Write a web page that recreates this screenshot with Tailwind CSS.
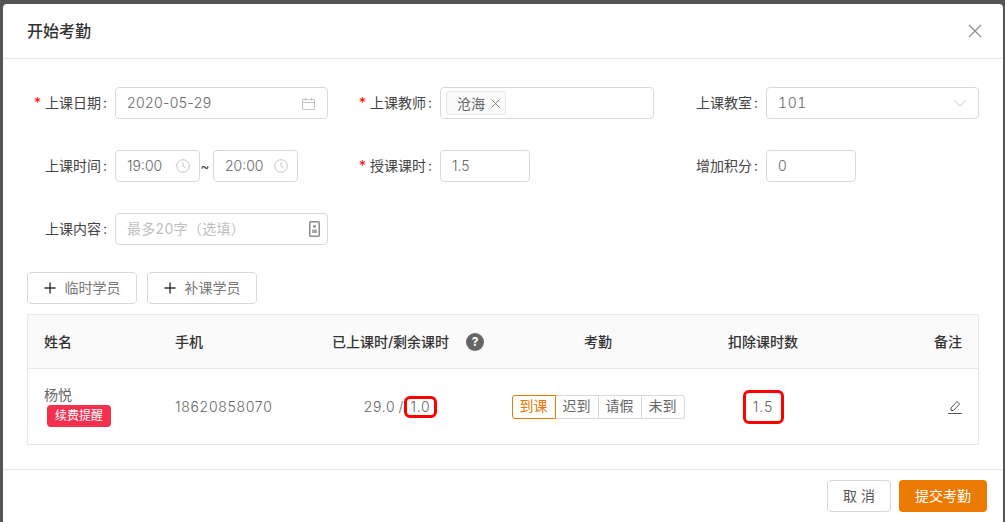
<!DOCTYPE html>
<html lang="zh-CN">

<head>
    <meta charset="UTF-8">
    <title>开始考勤</title>
    <script src="https://cdn.jsdelivr.net/npm/@tailwindcss/browser@4"></script>
</head>

<body class="bg-[#555555] h-[522px] overflow-hidden font-['Inter','Noto_Sans_CJK_SC',sans-serif] text-[14px] text-[#666666]">
    <div class="ml-[3px] mt-[4px] w-[1000px] h-[518px] bg-white rounded-t-[4px] flex flex-col">
        <!-- header -->
        <div class="h-[55px] shrink-0 border-b border-[#e8e8e8] flex items-center justify-between pl-[24px] pr-[21px]">
            <h1 class="text-[16px] font-medium text-[#333333]">开始考勤</h1>
            <svg class="w-[14px] h-[14px]" viewBox="0 0 14 14" fill="none" stroke="#888888" stroke-width="1.1"><path d="M1 1l12 12M13 1L1 13" /></svg>
        </div>

        <!-- form -->
        <div class="px-[24px] pt-[28px] grid grid-cols-[325px_326px_1fr] gap-y-[31px] h-[213px] content-start">
            <div class="flex items-center h-[32px]">
                <label class="w-[88px] pr-[8px] pb-[2px] flex justify-end text-[#444444]"><span class="text-[#ff0000] mr-[4px]">*</span>上课日期<span class="ml-[2px]">:</span></label>
                <div class="w-[213px] h-[32px] border border-[#d9d9d9] rounded-[4px] flex items-center justify-between pl-[11px] pr-[12px] font-light tracking-[0.4px]">
                    <span class="pb-[2px]">2020-05-29</span>
                    <svg class="w-[13px] h-[13px]" viewBox="0 0 13 13" fill="none" stroke="#c4c4c4"><path d="M.5 2.500h12v10H.5zM.5 5.500h12M3.500.5v3M9.500.5v3" /></svg>
                </div>
            </div>
            <div class="flex items-center h-[32px]">
                <label class="w-[88px] pr-[8px] pb-[2px] flex justify-end text-[#444444]"><span class="text-[#ff0000] mr-[4px]">*</span>上课教师<span class="ml-[2px]">:</span></label>
                <div class="w-[214px] h-[32px] border border-[#d9d9d9] rounded-[4px] flex items-center pl-[5px]">
                    <span class="h-[24px] w-[60px] bg-[#fafafa] border border-[#e8e8e8] rounded-[2px] flex items-center pl-[10px] gap-[6px]">沧海
                        <svg class="w-[9px] h-[9px]" viewBox="0 0 9 9" fill="none" stroke="#888888"><path d="M.5.5l8 8M8.500.5l-8 8" /></svg>
                    </span>
                </div>
            </div>
            <div class="flex items-center h-[32px]">
                <label class="w-[88px] pr-[8px] pb-[2px] flex justify-end text-[#444444]">上课教室<span class="ml-[2px]">:</span></label>
                <div class="w-[213px] h-[32px] border border-[#d9d9d9] rounded-[4px] flex items-center justify-between pl-[11px] pr-[12px] font-light tracking-[0.6px] tabular-nums">
                    <span class="pb-[2px]">101</span>
                    <svg class="w-[12px] h-[7px]" viewBox="0 0 12 7" fill="none" stroke="#c9c9c9"><path d="M.5.5L6 6 11.500.5" /></svg>
                </div>
            </div>

            <div class="flex items-center h-[32px]">
                <label class="w-[88px] pr-[8px] pb-[2px] flex justify-end text-[#444444]">上课时间<span class="ml-[2px]">:</span></label>
                <div class="w-[85px] h-[32px] border border-[#d9d9d9] rounded-[4px] flex items-center justify-between pl-[11px] pr-[9px] font-light">
                    <span class="pb-[2px]">19:00</span>
                    <svg class="w-[14px] h-[14px]" viewBox="0 0 14 14" fill="none" stroke="#c4c4c4"><circle cx="7" cy="7" r="6.300" /><path d="M7 3.500V7l2.500 2" /></svg>
                </div>
                <span class="w-[13px] pr-[3px] pb-[2px] text-center text-[#444444]">~</span>
                <div class="w-[85px] h-[32px] border border-[#d9d9d9] rounded-[4px] flex items-center justify-between pl-[11px] pr-[9px] font-light">
                    <span class="pb-[2px]">20:00</span>
                    <svg class="w-[14px] h-[14px]" viewBox="0 0 14 14" fill="none" stroke="#c4c4c4"><circle cx="7" cy="7" r="6.300" /><path d="M7 3.500V7l2.500 2" /></svg>
                </div>
            </div>
            <div class="flex items-center h-[32px]">
                <label class="w-[88px] pr-[8px] pb-[2px] flex justify-end text-[#444444]"><span class="text-[#ff0000] mr-[4px]">*</span>授课课时<span class="ml-[2px]">:</span></label>
                <div class="w-[90px] h-[32px] border border-[#d9d9d9] rounded-[4px] flex items-center pl-[11px] pb-[2px] font-light">1.5</div>
            </div>
            <div class="flex items-center h-[32px]">
                <label class="w-[88px] pr-[8px] pb-[2px] flex justify-end text-[#444444]">增加积分<span class="ml-[2px]">:</span></label>
                <div class="w-[90px] h-[32px] border border-[#d9d9d9] rounded-[4px] flex items-center pl-[11px] pb-[2px] font-light">0</div>
            </div>

            <div class="flex items-center h-[32px]">
                <label class="w-[88px] pr-[8px] pb-[2px] flex justify-end text-[#444444]">上课内容<span class="ml-[2px]">:</span></label>
                <div class="w-[213px] h-[32px] border border-[#d9d9d9] rounded-[4px] flex items-center justify-between pl-[11px] pr-[7px] text-[#bfbfbf] tracking-[0.3px]">
                    <span class="pb-[2px]">最多20字（选填）</span>
                    <svg class="w-[11px] h-[16px]" viewBox="0 0 11 16" fill="none"><rect x=".75" y=".75" width="9.500" height="14.500" rx="1" stroke="#8c8c8c" stroke-width="1.500" /><circle cx="5.500" cy="5.500" r="1.400" fill="#8c8c8c" /><path d="M3 12h5V8.500H3z" fill="#a8a8a8" /></svg>
                </div>
            </div>
        </div>

        <!-- add buttons -->
        <div class="px-[24px] flex gap-[10px]">
            <button class="w-[110px] h-[32px] border border-[#d9d9d9] rounded-[4px] flex items-center justify-center gap-[9px] text-[#777777]">
                <svg class="w-[12px] h-[12px]" viewBox="0 0 12 12" fill="none" stroke="#333333" stroke-width="1.400"><path d="M6 .5v11M.5 6h11" /></svg><span class="pb-[2px]">临时学员</span>
            </button>
            <button class="w-[110px] h-[32px] border border-[#d9d9d9] rounded-[4px] flex items-center justify-center gap-[9px] text-[#777777]">
                <svg class="w-[12px] h-[12px]" viewBox="0 0 12 12" fill="none" stroke="#333333" stroke-width="1.400"><path d="M6 .5v11M.5 6h11" /></svg><span class="pb-[2px]">补课学员</span>
            </button>
        </div>

        <!-- table -->
        <div class="mx-[24px] mt-[10px] border border-[#e8e8e8] h-[131px]">
            <div class="h-[54px] bg-[#fafafa] border-b border-[#e8e8e8] grid grid-cols-[131px_131px_236px_144px_186px_1fr] items-center font-medium text-[#333333]">
                <div class="pl-[16px]">姓名</div>
                <div class="pl-[16px]">手机</div>
                <div class="flex justify-center items-center gap-[17px]">
                    已上课时/剩余课时
                    <span class="w-[18px] h-[18px] rounded-full bg-[#666666] text-white text-[12px] font-bold flex items-center justify-center">?</span>
                </div>
                <div class="text-center">考勤</div>
                <div class="text-center">扣除课时数</div>
                <div class="text-right pr-[16px]">备注</div>
            </div>
            <div class="h-[75px] grid grid-cols-[131px_131px_236px_144px_186px_1fr] items-center">
                <div class="pl-[16px] leading-[20px]">
                    <div class="-mt-[1px]">杨悦</div>
                    <span class="ml-[3px] block w-[64px] h-[22px] bg-[#f5304f] rounded-[4px] text-white text-[12px] leading-[22px] text-center">续费提醒</span>
                </div>
                <div class="pl-[16px] tracking-[0.7px] font-light">18620858070</div>
                <div class="flex justify-end items-center pr-[89px] tracking-[0.7px] font-light">
                    29.0<span class="ml-[3px]">/</span><span class="w-[33px] h-[22px] border-[3px] border-[#ff0000] rounded-[6px] flex items-center justify-center">1.0</span>
                </div>
                <div class="flex justify-center">
                    <div class="flex h-[24px] text-[14px]">
                        <span class="w-[44px] pb-[2px] border border-[#ec7a02] text-[#ec7a02] rounded-l-[3px] flex items-center justify-center">到课</span>
                        <span class="w-[43px] pb-[2px] border-y border-r border-[#d9d9d9] flex items-center justify-center">迟到</span>
                        <span class="w-[43px] pb-[2px] border-y border-r border-[#d9d9d9] flex items-center justify-center">请假</span>
                        <span class="w-[43px] pb-[2px] border-y border-r border-[#d9d9d9] rounded-r-[3px] flex items-center justify-center">未到</span>
                    </div>
                </div>
                <div class="flex justify-center">
                    <span class="w-[41px] h-[34px] border-[3px] border-[#ff0000] rounded-[6px] flex items-center justify-center tracking-[1px] font-light">1.5</span>
                </div>
                <div class="flex justify-end pr-[16px]">
                    <svg class="w-[14px] h-[14px]" viewBox="0 0 14 14" fill="none" stroke="#555555"><path d="M0 13.500h14M3 10.500v-2.500L9 1.500l2.500 2.500L5.500 10.500z" /></svg>
                </div>
            </div>
        </div>

        <!-- footer -->
        <div class="mt-[24px] border-t border-[#e8e8e8] pt-[10px] pr-[16px] flex justify-end gap-[8px]">
            <button class="w-[64px] h-[32px] pb-[2px] border border-[#d9d9d9] rounded-[4px] text-[#555555]">取 消</button>
            <button class="w-[88px] h-[32px] pb-[2px] bg-[#ec7a02] rounded-[4px] text-white">提交考勤</button>
        </div>
    </div>
</body>

</html>
